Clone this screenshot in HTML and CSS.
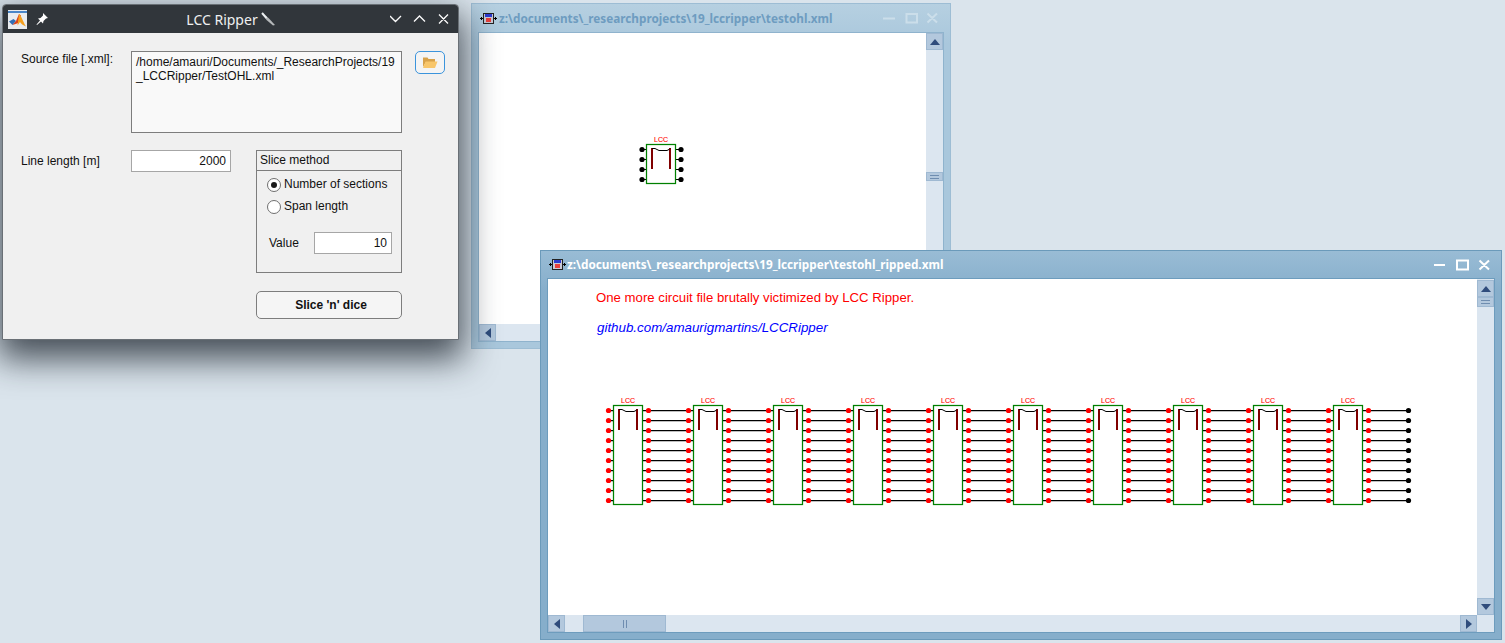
FILE: index.html
```html
<!DOCTYPE html>
<html lang="en">
<head>
<meta charset="utf-8">
<title>LCC Ripper</title>
<link rel="stylesheet" href="styles.css">
</head>
<body>
<svg class="defs" width="0" height="0" aria-hidden="true">
  <defs>
    <g id="wico">
      <path d="M0 6.5h17" stroke="#000" fill="none"/>
      <path d="M1.5 5v3M15.5 5v3" stroke="#000" fill="none"/>
      <rect x="3.5" y="1.5" width="10" height="10" fill="#c9c9d6" stroke="#222"/>
      <rect x="5" y="2" width="7" height="3" fill="#2a3ad0"/>
      <rect x="6" y="6" width="5" height="4" fill="#e8403c"/>
    </g>
    <g id="stage">
      <path d="M648 410.5h40M648 420.5h40M648 430.5h40M648 440.5h40M648 450.5h40M648 460.5h40M648 470.5h40M648 480.5h40M648 490.5h40M648 500.5h40" stroke="#000" stroke-width="1.25" fill="none"/>
      <path d="M608 410.5h5M608 420.5h5M608 430.5h5M608 440.5h5M608 450.5h5M608 460.5h5M608 470.5h5M608 480.5h5M608 490.5h5M608 500.5h5M643 410.5h5M643 420.5h5M643 430.5h5M643 440.5h5M643 450.5h5M643 460.5h5M643 470.5h5M643 480.5h5M643 490.5h5M643 500.5h5" stroke="#000" stroke-width="1.25" fill="none"/>
      <rect x="613.5" y="405.5" width="29" height="99" fill="#fff" stroke="#008000" stroke-width="1.25"/>
      <text x="628" y="402.5" class="lcc">LCC</text>
      <rect x="618" y="409" width="2" height="21" fill="#800000"/>
      <rect x="636" y="409" width="2" height="21" fill="#800000"/>
      <path d="M619 409.5h3l2 1 2 1h8l2-1 1-1" stroke="#000" fill="none"/>
      <g fill="#f00">
        <circle cx="608.5" cy="410.5" r="2.6"/><circle cx="608.5" cy="420.5" r="2.6"/><circle cx="608.5" cy="430.5" r="2.6"/><circle cx="608.5" cy="440.5" r="2.6"/><circle cx="608.5" cy="450.5" r="2.6"/><circle cx="608.5" cy="460.5" r="2.6"/><circle cx="608.5" cy="470.5" r="2.6"/><circle cx="608.5" cy="480.5" r="2.6"/><circle cx="608.5" cy="490.5" r="2.6"/><circle cx="608.5" cy="500.5" r="2.6"/>
        <circle cx="648.5" cy="410.5" r="2.6"/><circle cx="648.5" cy="420.5" r="2.6"/><circle cx="648.5" cy="430.5" r="2.6"/><circle cx="648.5" cy="440.5" r="2.6"/><circle cx="648.5" cy="450.5" r="2.6"/><circle cx="648.5" cy="460.5" r="2.6"/><circle cx="648.5" cy="470.5" r="2.6"/><circle cx="648.5" cy="480.5" r="2.6"/><circle cx="648.5" cy="490.5" r="2.6"/><circle cx="648.5" cy="500.5" r="2.6"/>
      </g>
    </g>
  </defs>
</svg>

<section class="win win-back">
  <header class="win-title">
    <svg class="win-ico" width="17" height="13" viewBox="0 0 17 13"><use href="#wico"/></svg>
    <span class="win-name">z:\documents\_researchprojects\19_lccripper\testohl.xml</span>
    <svg class="win-ctl" width="55" height="12" viewBox="0 0 55 12"><path d="M0 6.5h12M23.5 2h10.500v8.500h-10.500zM44.500 1.500l9.500 9M54 1.500l-9.500 9" fill="none" stroke="currentColor" stroke-width="2"/></svg>
  </header>
  <div class="client">
    <div class="canvas">
      <svg class="lcc-one" width="60" height="60" viewBox="630 130 60 60">
        <path d="M642 149.500h5M642 159.500h5M642 169.500h5M642 179.500h5M676 149.500h5M676 159.500h5M676 169.500h5M676 179.500h5" stroke="#000"/>
        <rect x="646.500" y="144.500" width="29" height="39" fill="#fff" stroke="#008000" stroke-width="1.25"/>
        <text x="661" y="141.500" class="lcc">LCC</text>
        <rect x="651" y="148" width="2" height="21" fill="#800000"/>
        <rect x="669" y="148" width="2" height="21" fill="#800000"/>
        <path d="M652 148.500h3l2 1 2 1h8l2-1 1-1" stroke="#000" fill="none"/>
        <g fill="#000">
          <circle cx="642" cy="149.500" r="2.6"/><circle cx="642" cy="159.500" r="2.600"/><circle cx="642" cy="169.500" r="2.600"/><circle cx="642" cy="179.500" r="2.600"/>
          <circle cx="681" cy="149.500" r="2.6"/><circle cx="681" cy="159.500" r="2.600"/><circle cx="681" cy="169.500" r="2.600"/><circle cx="681" cy="179.500" r="2.600"/>
        </g>
      </svg>
    </div>
    <div class="vbar vbar-back">
      <button class="sb-btn" type="button"><i class="arr arr-up"></i></button>
      <div class="thumb thumb-v thumb-v-back"><i class="grip-h"></i></div>
    </div>
    <div class="hbar">
      <button class="sb-btn" type="button"><i class="arr arr-left"></i></button>
    </div>
    <div class="corner"></div>
  </div>
</section>

<section class="win win-front">
  <header class="win-title">
    <svg class="win-ico" width="17" height="13" viewBox="0 0 17 13"><use href="#wico"/></svg>
    <span class="win-name">z:\documents\_researchprojects\19_lccripper\testohl_ripped.xml</span>
    <svg class="win-ctl" width="56" height="12" viewBox="0 0 56 12"><path d="M0 6h11M23 1.500h11v9H23zM45.500 1.500l9.500 9M55 1.500l-9.500 9" fill="none" stroke="currentColor" stroke-width="2"/></svg>
  </header>
  <div class="client">
    <div class="canvas">
      <p class="note-red">One more circuit file brutally victimized by LCC Ripper.</p>
      <p class="note-link">github.com/amaurigmartins/LCCRipper</p>
      <svg class="lcc-chain" width="820" height="120" viewBox="600 390 820 120">
        <use href="#stage"/>
        <use href="#stage" x="80"/>
        <use href="#stage" x="160"/>
        <use href="#stage" x="240"/>
        <use href="#stage" x="320"/>
        <use href="#stage" x="400"/>
        <use href="#stage" x="480"/>
        <use href="#stage" x="560"/>
        <use href="#stage" x="640"/>
        <use href="#stage" x="720"/>
        <g fill="#000">
          <circle cx="1408.500" cy="410.500" r="2.600"/><circle cx="1408.500" cy="420.500" r="2.600"/><circle cx="1408.500" cy="430.500" r="2.600"/><circle cx="1408.500" cy="440.500" r="2.600"/><circle cx="1408.500" cy="450.500" r="2.600"/><circle cx="1408.500" cy="460.500" r="2.600"/><circle cx="1408.500" cy="470.500" r="2.600"/><circle cx="1408.500" cy="480.500" r="2.600"/><circle cx="1408.500" cy="490.500" r="2.600"/><circle cx="1408.500" cy="500.500" r="2.600"/>
        </g>
      </svg>
    </div>
    <div class="vbar">
      <button class="sb-btn" type="button"><i class="arr arr-up"></i></button>
      <div class="thumb thumb-v"><i class="grip-h"></i></div>
      <button class="sb-btn sb-end" type="button"><i class="arr arr-down"></i></button>
    </div>
    <div class="hbar">
      <button class="sb-btn" type="button"><i class="arr arr-left"></i></button>
      <div class="thumb thumb-h"><i class="grip-v"></i></div>
      <button class="sb-btn sb-end" type="button"><i class="arr arr-right"></i></button>
    </div>
    <div class="corner"></div>
  </div>
</section>

<section class="ml">
  <header class="ml-title">
    <svg class="ml-logo" width="19" height="19" viewBox="0 0 19 19">
      <rect width="19" height="19" fill="#e9ecef"/>
      <rect y="1" width="19" height="2" fill="#4a86c8"/>
      <path d="M1 11.500l4.500-2.500 2.500 2-3.500 4z" fill="#2f6fb8"/>
      <path d="M4.500 15l3.500-4 3-7 2 1.500-2.500 7.500z" fill="#d9431e"/>
      <path d="M11 4c2.500 1.500 4 8 7 12.500-3-1-5-3-6-4.500l-2.500 3.500z" fill="#f4a01f"/>
    </svg>
    <svg class="ml-pin" width="14" height="14" viewBox="0 0 14 14"><path d="M8 1l5 5-2 .5-2.500 2.500-.5 2.500-2-2L2 13l-.5-.5L5 8.500l-2-2 2.500-.5L8 3.500z" fill="#fff"/></svg>
    <div class="ml-name">
      <span>LCC Ripper</span>
      <svg width="15" height="14" viewBox="0 0 15 14"><path d="M1 1l6.500 5 6.500 7-2 .500L5.500 8z" fill="#b5b8ba"/><path d="M1 1l4.500 5" stroke="#eceff1" stroke-width="2" fill="none"/></svg>
    </div>
    <svg class="ml-ctl" width="59" height="12" viewBox="0 0 59 12"><path d="M0 3l5.500 5.500L11 3M24 8.500L29.500 3 35 8.500M49 1.500l9 9M58 1.500l-9 9" fill="none" stroke="#fcfcfc" stroke-width="1.300"/></svg>
  </header>
  <div class="ml-body">
    <div class="row-source">
      <label class="lbl lbl-source">Source file [.xml]:</label>
      <div class="path-box">/home/amauri/Documents/_ResearchProjects/19<br>_LCCRipper/TestOHL.xml</div>
      <button class="folder-btn" type="button" aria-label="Browse">
        <svg width="16" height="13" viewBox="0 0 16 13"><path d="M1 1.500h4.500l1 1.500H13v3H4L1 11z" fill="#d8a24a"/><path d="M3.500 5.500H15.500l-2.500 6.500H1z" fill="#f8c66a"/></svg>
      </button>
    </div>
    <div class="row-main">
      <label class="lbl lbl-line">Line length [m]</label>
      <div class="num num-line">2000</div>
      <div class="side">
        <fieldset class="panel">
          <div class="panel-head">Slice method</div>
          <div class="panel-body">
            <div class="radio-row"><i class="radio radio-on"></i><span>Number of sections</span></div>
            <div class="radio-row"><i class="radio"></i><span>Span length</span></div>
            <div class="value-row"><span>Value</span><div class="num num-value">10</div></div>
          </div>
        </fieldset>
        <button class="go" type="button">Slice 'n' dice</button>
      </div>
    </div>
  </div>
</section>
</body>
</html>
```
FILE: styles.css
```css
* { box-sizing: border-box; }
html, body { margin: 0; height: 100%; overflow: hidden; }
body {
  position: relative;
  background: #dae4ec;
  font-family: "Liberation Sans", Arial, sans-serif;
}
.defs { position: absolute; }

/* Classic desktop windows */
.win {
  position: absolute;
  display: flex;
  flex-direction: column;
  border: 1px solid var(--edge);
  background: linear-gradient(var(--top), var(--bot) 40px);
}
.win-back {
  --edge: #9dbdd4; --top: #b6d0e1; --bot: #a9c7dc; --inner: #8fb3cd; --ttl: #6e9cc0; --ctl: #cbdeea;
  left: 471px; top: 3px; width: 480px; height: 346px;
  padding: 0 6px 6px 6px;
}
.win-front {
  --edge: #6b9aba; --top: #99bcd5; --bot: #86aecb; --inner: #6d9cbd; --ttl: #fff; --ctl: #fff;
  left: 540px; top: 250px; width: 962px; height: 390px;
  padding: 0 6px 6px 6px;
}
.win-title {
  flex: none;
  display: flex;
  align-items: center;
  height: 28px;
  padding: 0 6px 0 2px;
  color: var(--ttl);
}
.win-front .win-title { height: 27px; padding-right: 5px; }
.win-ico { flex: none; margin-right: 2px; }
.win-front .win-ico { margin-right: 1px; }
.win-name {
  flex: 1;
  font: bold 11.750px "Noto Sans", sans-serif;
  white-space: nowrap;
}
.win-front .win-name { padding-bottom: 2px; }
.win-ctl { flex: none; color: var(--ctl); }

.client {
  flex: 1;
  min-height: 0;
  display: grid;
  grid-template-columns: 1fr 17px;
  grid-template-rows: 1fr 17px;
  border: 1px solid var(--inner);
  background: #fff;
}
.canvas { overflow: hidden; background: #fff; }
.lcc-one { display: block; margin: 97px 0 0 151px; }
.lcc-chain { display: block; margin: 54px 0 0 52px; }
.lcc {
  font: 7px "Liberation Sans", Arial, sans-serif;
  fill: #f00;
  stroke: #f00;
  stroke-width: .1px;
  text-anchor: middle;
}
.note-red, .note-link {
  margin: 0 0 0 48px;
  line-height: 16px;
  white-space: nowrap;
}
.note-red { padding-top: 11px; color: #f00; font-size: 13.200px; }
.note-link { margin-left: 49px; padding-top: 14px; color: #00f; font-size: 13.350px; font-style: italic; }

/* Scrollbars */
.vbar, .hbar { display: flex; background: #dce6f0; }
.vbar { flex-direction: column; padding-top: 1px; }
.hbar { align-items: stretch; }
.vbar-back { padding-top: 0; }
.corner { background: #dce6f0; }
.sb-btn {
  flex: none;
  display: flex;
  align-items: center;
  justify-content: center;
  width: 17px;
  height: 17px;
  padding: 0;
  border: 1px solid #9fb9d2;
  background: #b3c8dd;
}
.sb-end { margin-left: auto; }
.vbar .sb-end { margin-top: auto; margin-left: 0; }
.arr { display: block; width: 0; height: 0; border: 0 solid transparent; }
.arr-up { border-width: 0 5.500px 6px; border-bottom-color: #2f4c7c; }
.arr-down { border-width: 6px 5.500px 0; border-top-color: #2f4c7c; }
.arr-left { border-width: 5.500px 6px 5.500px 0; border-right-color: #2f4c7c; }
.arr-right { border-width: 5.500px 0 5.500px 6px; border-left-color: #2f4c7c; }
.thumb {
  display: flex;
  align-items: center;
  justify-content: center;
  border: 1px solid #9fb9d2;
  background: #b3c8dd;
}
.thumb-v { flex: none; height: 10px; }
.thumb-v-back { margin-top: 122px; height: 9px; }
.thumb-h { width: 83px; margin-left: 18px; }
.grip-h { display: block; width: 9px; height: 4px; border-top: 1px solid #6f8db0; border-bottom: 1px solid #6f8db0; }
.grip-v { display: block; width: 4px; height: 8px; border-left: 1px solid #6f8db0; border-right: 1px solid #6f8db0; }

/* MATLAB dialog */
.ml {
  position: absolute;
  left: 2px;
  top: 4px;
  width: 457px;
  height: 336px;
  display: flex;
  flex-direction: column;
  border: 1px solid #6a7076;
  border-radius: 4px 4px 0 0;
  background: #f0f0f0;
  box-shadow: 0 15px 34px 4px rgba(20, 28, 38, .75);
}
.ml-title {
  flex: none;
  display: flex;
  align-items: center;
  height: 28px;
  padding: 0 8px 0 5px;
  background: #31363b;
  border-radius: 3px 3px 0 0;
}
.ml-logo { flex: none; }
.ml-pin { flex: none; margin-left: 8px; }
.ml-name {
  flex: 1;
  display: flex;
  align-items: center;
  justify-content: center;
  gap: 3px;
  padding-left: 23px;
  color: #eff0f1;
  font: 14px "Noto Sans", sans-serif;
}
.ml-ctl { flex: none; margin-right: 1px; }
.ml-body {
  flex: 1;
  padding: 18px 13px 0 18px;
  color: #111;
  font-size: 12px;
}
.row-source { display: flex; align-items: flex-start; height: 82px; }
.lbl { flex: none; width: 110px; line-height: 14px; }
.lbl-source { padding-top: 1px; }
.lbl-line { padding-top: 4px; }
.path-box {
  width: 271px;
  height: 82px;
  padding: 3px 4px;
  border: 1px solid #7d7d7d;
  background: #f9f9f9;
  line-height: 14px;
  white-space: nowrap;
}
.folder-btn {
  display: flex;
  align-items: center;
  justify-content: center;
  width: 30px;
  height: 23px;
  margin-left: 13px;
  padding: 0;
  border: 1px solid #3b94dc;
  border-radius: 5px;
  background: #f4f4f4;
}
.row-main { display: flex; align-items: flex-start; margin-top: 17px; }
.num {
  border: 1px solid #a6a6a6;
  background: #fff;
  text-align: right;
  white-space: nowrap;
}
.num-line { width: 100px; height: 22px; padding: 0 4px; line-height: 20px; }
.side { width: 146px; margin-left: 25px; }
.panel {
  display: block;
  width: 146px;
  height: 123px;
  margin: 0;
  padding: 0;
  border: 1px solid #7d7d7d;
}
.panel-head {
  height: 20px;
  padding-left: 3px;
  border-bottom: 1px solid #7d7d7d;
  line-height: 18px;
}
.panel-body { padding: 2px 0 0 10px; }
.radio-row { display: flex; align-items: center; gap: 3px; height: 22px; }
.radio {
  flex: none;
  display: flex;
  align-items: center;
  justify-content: center;
  width: 14px;
  height: 14px;
  margin-top: 2px;
  border: 1px solid #6f6f6f;
  border-radius: 50%;
  background: #fff;
}
.radio-on::after {
  content: "";
  width: 6px;
  height: 6px;
  border-radius: 50%;
  background: #1a1a1a;
}
.value-row { display: flex; align-items: center; margin: 15px 0 0 2px; }
.value-row span { width: 45px; }
.num-value { width: 78px; height: 22px; padding: 0 4px; line-height: 20px; }
.go {
  display: block;
  width: 146px;
  height: 28px;
  margin-top: 18px;
  padding: 0 0 0 4px;
  border: 1px solid #7d7d7d;
  border-radius: 5px;
  background: #f5f5f5;
  color: #111;
  font: bold 12px "Liberation Sans", Arial, sans-serif;
}
```
